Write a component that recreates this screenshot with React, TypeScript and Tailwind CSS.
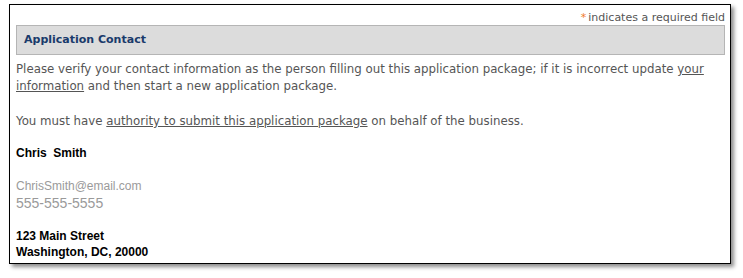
export default function App() {
  return (
    <div className="w-[743px] h-[278px] bg-white pl-[9px] pt-[4px]">
      <div className="w-[722px] h-[260px] border-[1.5px] border-black bg-white shadow-[3px_3px_4px_rgba(0,0,0,0.45)] pl-[6px] pr-[5px]">
        <div
          className="flex justify-end pt-[6px] h-[20px] text-[11px] leading-[14px] text-[#555]"
          style={{ fontFamily: "'DejaVu Sans', sans-serif" }}
        >
          <span className="text-[#f07b2a] mr-[2px]">*</span>
          <span>indicates a required field</span>
        </div>
        <div
          className="h-[30px] border border-[#b5b5b5] bg-[#dcdcdc] flex items-center pl-[7px] text-[11px] font-bold text-[#1a3a6b]"
          style={{ fontFamily: "'DejaVu Sans', sans-serif" }}
        >
          Application Contact
        </div>
        <div
          className="pt-[6px] text-[11.8px] leading-[17px] text-[#555]"
          style={{ fontFamily: "'DejaVu Sans', sans-serif" }}
        >
          <p>
            Please verify your contact information as the person filling out this application package; if it is incorrect update{" "}
            <a className="underline">your</a>
            <br />
            <a className="underline">information</a> and then start a new application package.
          </p>
          <p className="mt-[18px]">
            You must have <a className="underline">authority to submit this application package</a> on behalf of the business.
          </p>
        </div>
        <div className="pt-[15px] text-[12px] text-black" style={{ fontFamily: "'Liberation Sans', sans-serif" }}>
          <p className="font-bold leading-[16px] whitespace-pre">Chris  Smith</p>
          <p className="mt-[17px] leading-[16px] text-[#9a9a9a]">ChrisSmith@email.com</p>
          <p className="text-[14px] leading-[18px] text-[#9a9a9a]">555-555-5555</p>
          <p className="mt-[16px] font-bold leading-[16px]">123 Main Street</p>
          <p className="font-bold leading-[16px]">Washington, DC, 20000</p>
        </div>
      </div>
    </div>
  );
}
